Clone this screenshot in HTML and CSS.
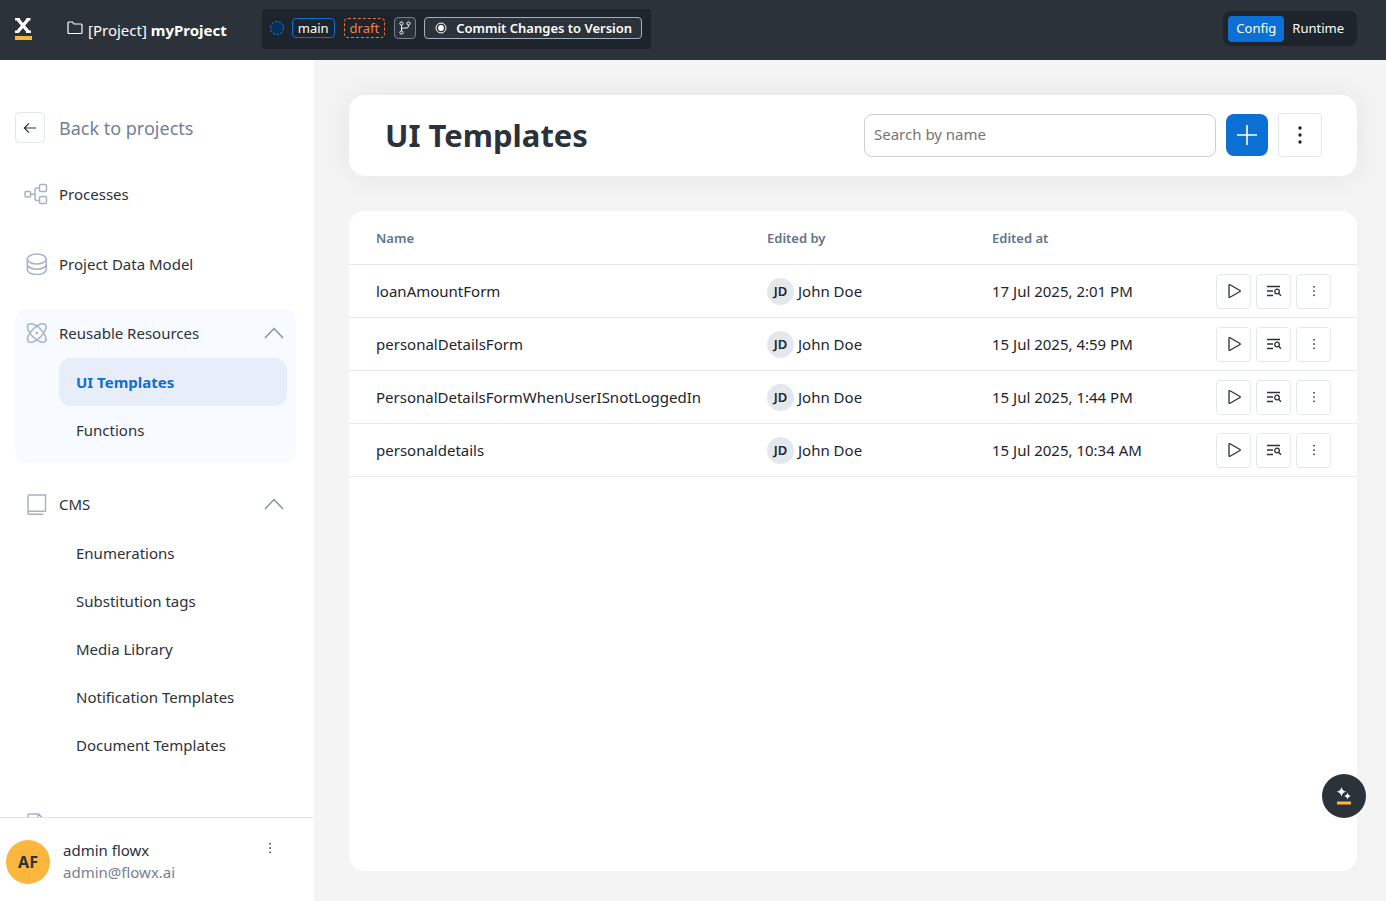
FILE: index.html
```html
<!DOCTYPE html>
<html lang="en">
<head>
  <meta charset="UTF-8">
  <meta name="viewport" content="width=device-width, initial-scale=1.0">
  <title>UI Templates</title>
  <link rel="stylesheet" href="styles.css">
</head>
<body>
  <!-- shared icons -->
  <svg class="sprite" aria-hidden="true">
    <symbol id="i-chevron" viewBox="0 0 20 12"><path d="M1 11 10 1.500 19 11"/></symbol>
    <symbol id="i-play" viewBox="0 0 14 16"><path d="M2 2.200v11.600c0 .5.5.8 1 .5l10-5.800c.4-.2.4-.8 0-1L3 1.700c-.5-.3-1 0-1 .5z"/></symbol>
    <symbol id="i-search-list" viewBox="0 0 16 12"><path d="M1 1.500h13M1 6h6M1 10.500h6"/><circle cx="11" cy="6.500" r="2.300"/><path d="m12.800 8.500 2.200 2.300"/></symbol>
    <symbol id="i-dots" viewBox="0 0 4 12"><rect x="1.300" y="1" width="1.500" height="1.500"/><rect x="1.300" y="5.300" width="1.500" height="1.500"/><rect x="1.300" y="9.600" width="1.500" height="1.500"/></symbol>
  </svg>

  <header class="topbar">
    <svg class="logo" viewBox="0 0 18 22">
      <path d="M4 1.500 14 13.500M14 1.500 4 13.500" stroke="#fff" stroke-width="3.400"/>
      <path d="M1 1.200h5M12.500 1.200h4M1 13.800h4M12 13.800h5" stroke="#fff" stroke-width="2.400"/>
      <rect x="1" y="18" width="17" height="4" fill="#fbb63e"/>
    </svg>
    <div class="project">
      <svg class="folder" viewBox="0 0 16 14"><path d="M1 3V2q0-1 1-1h3.500L7 3h7q1 0 1 1v7.500q0 1-1 1H2q-1 0-1-1z"/></svg>
      <span>[Project] <b>myProject</b></span>
    </div>
    <div class="branch-bar">
      <svg class="branch-dot" viewBox="0 0 16 16"><circle cx="8" cy="8" r="6.500"/></svg>
      <span class="badge badge-main">main</span>
      <span class="badge badge-draft">draft</span>
      <button class="branch-btn" aria-label="Branches">
        <svg viewBox="0 0 12 14"><circle cx="2.500" cy="2.500" r="1.600"/><circle cx="9.500" cy="2.500" r="1.600"/><circle cx="2.500" cy="11.500" r="1.600"/><path d="M2.500 4.200v5.600M9.500 4.200v1Q9.500 7 7.500 7h-3q-2 0-2 2"/></svg>
      </button>
      <button class="commit-btn">
        <svg viewBox="0 0 12 12"><circle cx="6" cy="6" r="5" fill="none" stroke="#fff"/><circle cx="6" cy="6" r="2.900" fill="#fff"/></svg>
        Commit Changes to Version
      </button>
    </div>
    <div class="mode-switch">
      <button class="mode active">Config</button>
      <button class="mode">Runtime</button>
    </div>
  </header>

  <div class="layout">
    <aside class="sidebar">
      <nav class="menu">
        <a class="back" href="#">
          <span class="back-icon"><svg viewBox="0 0 14 12"><path d="M13 6H1.500M6 1.300 1.300 6 6 10.700"/></svg></span>
          Back to projects
        </a>
        <a class="menu-item" href="#">
          <svg viewBox="0 0 24 22"><rect x="1" y="8.500" width="5.500" height="5.500" rx="1"/><rect x="15.500" y="1.500" width="7" height="7" rx="1.300"/><rect x="15.500" y="13.500" width="7" height="7" rx="1.300"/><path d="M6.500 11.200H11M15.500 5h-2.500q-2 0-2 2v8.500q0 2 2 2h2.500"/></svg>
          Processes
        </a>
        <a class="menu-item" href="#">
          <svg viewBox="0 0 24 22"><ellipse cx="12.800" cy="6" rx="9.500" ry="5"/><path d="M3.300 6v10.500c0 2.800 4.300 5 9.500 5s9.500-2.200 9.500-5V6M3.300 11.300c0 2.700 4.300 4.900 9.500 4.900s9.500-2.200 9.500-4.900"/></svg>
          Project Data Model
        </a>
        <div class="group open">
          <button class="menu-item">
            <svg viewBox="0 0 24 22"><ellipse cx="12.800" cy="11" rx="12" ry="5.400" transform="rotate(45 12.800 11)"/><ellipse cx="12.800" cy="11" rx="12" ry="5.400" transform="rotate(-45 12.800 11)"/><circle cx="12.800" cy="11" r=".6"/></svg>
            Reusable Resources
            <svg class="chevron"><use href="#i-chevron"/></svg>
          </button>
          <div class="sub">
            <a class="active" href="#">UI Templates</a>
            <a href="#">Functions</a>
          </div>
        </div>
        <div class="group">
          <button class="menu-item">
            <svg viewBox="0 0 24 22"><path d="M4 20V3.500Q4 2 5.500 2h16v16.200H5.800Q4 18.200 4 20q0 1.300 1.500 1.300h14"/></svg>
            CMS
            <svg class="chevron"><use href="#i-chevron"/></svg>
          </button>
          <div class="sub">
            <a href="#">Enumerations</a>
            <a href="#">Substitution tags</a>
            <a href="#">Media Library</a>
            <a href="#">Notification Templates</a>
            <a href="#">Document Templates</a>
          </div>
        </div>
        <div class="group">
          <button class="menu-item" aria-label="More">
            <svg viewBox="0 0 24 22"><path d="M4 22V7q0-1 1-1h9.500l4.500 4.500V22M14 6v5h5"/></svg>
          </button>
        </div>
      </nav>
      <div class="user">
        <span class="user-avatar">AF</span>
        <div class="user-info">
          <div>admin flowx</div>
          <div class="user-mail">admin@flowx.ai</div>
        </div>
        <button class="user-menu" aria-label="Account menu"><svg><use href="#i-dots"/></svg></button>
      </div>
    </aside>

    <main class="content">
      <section class="page-head">
        <h1>UI Templates</h1>
        <input class="search" type="text" placeholder="Search by name" aria-label="Search by name">
        <button class="add-btn" aria-label="Add"><svg viewBox="0 0 20 20"><path d="M10 0v20M0 10h20"/></svg></button>
        <button class="more-btn" aria-label="More"><svg viewBox="0 0 4 18"><circle cx="2" cy="2" r="1.700"/><circle cx="2" cy="9" r="1.700"/><circle cx="2" cy="16" r="1.700"/></svg></button>
      </section>

      <section class="table-card">
        <table>
          <thead>
            <tr>
              <th>Name</th>
              <th class="col-by">Edited by</th>
              <th class="col-at">Edited at</th>
              <th class="col-actions"></th>
            </tr>
          </thead>
          <tbody id="rows"></tbody>
        </table>
      </section>
    </main>
  </div>

  <button class="assistant" aria-label="Assistant">
    <svg viewBox="0 0 16 18"><path d="M5.500 0Q6.200 4 10.500 4.800 6.200 5.600 5.500 9.600 4.800 5.600.500 4.800 4.800 4 5.500 0z" fill="#fff"/><path d="M11.500 5.500q.5 3 3.500 3.500-3 .5-3.500 3.500-.5-3-3.500-3.500 3-.5 3.500-3.500z" fill="#fff"/><rect x="1" y="14.500" width="14" height="3" fill="#fbb63e"/></svg>
  </button>

  <script>
    const templates = [
      { name: "loanAmountForm", by: "John Doe", at: "17 Jul 2025, 2:01 PM" },
      { name: "personalDetailsForm", by: "John Doe", at: "15 Jul 2025, 4:59 PM" },
      { name: "PersonalDetailsFormWhenUserISnotLoggedIn", by: "John Doe", at: "15 Jul 2025, 1:44 PM" },
      { name: "personaldetails", by: "John Doe", at: "15 Jul 2025, 10:34 AM" }
    ];

    document.getElementById('rows').innerHTML = templates.map(t => `
      <tr>
        <td>${t.name}</td>
        <td><div class="editor"><span class="avatar">JD</span>${t.by}</div></td>
        <td>${t.at}</td>
        <td>
          <div class="actions">
            <button aria-label="Run"><svg class="play"><use href="#i-play"/></svg></button>
            <button aria-label="Usages"><svg class="search-list"><use href="#i-search-list"/></svg></button>
            <button aria-label="More"><svg class="dots"><use href="#i-dots"/></svg></button>
          </div>
        </td>
      </tr>`).join('');
  </script>
</body>
</html>
```
FILE: styles.css
```css
* { margin: 0; padding: 0; box-sizing: border-box; }
body {
  height: 100vh;
  display: flex;
  flex-direction: column;
  background: #f4f4f4;
  font-family: 'Noto Sans', 'Open Sans', sans-serif;
  font-size: 15px;
  line-height: 22px;
  color: #1e242c;
}
button, input { font: inherit; color: inherit; }
button { background: none; border: none; cursor: pointer; }
a { color: inherit; text-decoration: none; }
svg { flex: none; fill: none; }
.sprite { display: none; }

/* top bar */
.topbar {
  height: 60px;
  flex: none;
  display: flex;
  align-items: center;
  padding: 0 29px 3px 14px;
  background: #2b323a;
  color: #fff;
}
.logo { width: 18px; height: 22px; }
.project {
  display: flex;
  align-items: center;
  gap: 5px;
  margin-left: 35px;
  padding-top: 3px;
}
.folder { width: 16px; height: 14px; margin-bottom: 4px; stroke: #fff; stroke-width: 1.2; }
.branch-bar {
  height: 40px;
  display: flex;
  align-items: center;
  gap: 9px;
  margin-left: 35px;
  padding: 0 9px 2px 7px;
  border-radius: 4px;
  background: #1d242b;
  font-size: 13px;
}
.branch-dot {
  width: 16px;
  height: 16px;
  margin-right: -2px;
  fill: #04305c;
  stroke: #2a83dc;
  stroke-dasharray: 2.5 1.5;
}
.badge {
  height: 20px;
  line-height: 18px;
  padding: 0 5px;
  border-radius: 4px;
}
.badge-main { border: 1px solid #0c6fd3; }
.badge-draft { border: 1px dashed #f0743a; color: #f08150; }
.branch-btn, .commit-btn {
  height: 22px;
  display: flex;
  align-items: center;
  justify-content: center;
  border: 1px solid #a6afbd;
  border-radius: 4px;
  background: #2b323a;
}
.branch-btn { width: 22px; border-color: #76808f; }
.branch-btn svg { width: 12px; height: 14px; stroke: #fff; }
.commit-btn {
  gap: 9px;
  padding: 0 9px 0 10px;
  margin-left: -1px;
  font-weight: 600;
  line-height: 18px;
}
.commit-btn svg { width: 12px; height: 12px; }
.mode-switch {
  display: flex;
  margin-left: auto;
  padding: 5px 5px 4px;
  border-radius: 8px;
  background: #1d242b;
  font-size: 13px;
}
.mode {
  height: 26px;
  padding: 0 8px 2px;
  border-radius: 4px;
}
.mode.active { background: #0c6fd3; }

.layout {
  flex: 1;
  display: flex;
  min-height: 0;
}

/* sidebar */
.sidebar {
  width: 314px;
  flex: none;
  display: flex;
  flex-direction: column;
  background: #fff;
  color: #2b323a;
}
.menu {
  flex: 1;
  overflow: hidden;
  padding: 52px 18px 0 15px;
}
.back {
  display: flex;
  align-items: center;
  gap: 14px;
  margin-bottom: 27px;
  font-size: 18px;
  color: #718096;
}
.back-icon {
  width: 30px;
  height: 31px;
  display: flex;
  align-items: center;
  justify-content: center;
  border: 1px solid #e3e8ed;
  border-radius: 4px;
}
.back-icon svg { width: 14px; height: 12px; stroke: #2b323a; stroke-width: 1.2; }
.menu-item {
  width: 100%;
  height: 48px;
  display: flex;
  align-items: center;
  gap: 11px;
  margin-bottom: 22px;
  padding: 0 12px 0 9px;
  text-align: left;
}
.menu-item svg { width: 24px; height: 22px; stroke: #a6b3c4; stroke-width: 1.5; }
.menu-item .chevron { width: 20px; height: 12px; margin-left: auto; stroke: #8391a5; }
.group {
  margin-top: -1px;
  margin-bottom: 18px;
  padding-bottom: 9px;
  border-radius: 12px;
}
.group.open { background: #f7fbff; }
.group .menu-item { margin-bottom: 0; }
.sub { padding: 1px 9px 0 44px; }
.sub a {
  height: 48px;
  display: flex;
  align-items: center;
  padding: 0 17px;
  border-radius: 12px;
}
.sub a.active {
  background: #e7eefa;
  color: #0c6fd3;
  font-weight: 700;
}
.user {
  height: 84px;
  flex: none;
  display: flex;
  align-items: center;
  gap: 13px;
  padding: 4px 34px 0 6px;
  border-top: 1px solid #dfe3e8;
}
.user-avatar {
  width: 44px;
  height: 44px;
  line-height: 44px;
  border-radius: 50%;
  background: #fbb63e;
  text-align: center;
  font-size: 16px;
  font-weight: 700;
}
.user-info { padding-bottom: 2px; }
.user-mail { color: #77808f; }
.user-menu { align-self: flex-start; margin-left: auto; padding: 20px 8px; line-height: 0; }
.user-menu svg { width: 4px; height: 12px; fill: #2b323a; }

/* content */
.content {
  flex: 1;
  min-width: 0;
  display: flex;
  flex-direction: column;
  gap: 35px;
  padding: 35px 29px 30px 35px;
}
.page-head {
  display: flex;
  align-items: center;
  gap: 10px;
  padding: 18px 35px 19px 36px;
  border-radius: 16px;
  background: #fff;
  box-shadow: 0 0 30px rgba(43, 50, 90, 0.08);
}
h1 {
  margin-right: auto;
  font-size: 31px;
  line-height: 44px;
  color: #2b323a;
}
.search {
  width: 352px;
  height: 43px;
  padding: 0 9px 2px;
  border: 1px solid #cbcfdb;
  border-radius: 8px;
}
.search::placeholder { color: #757575; }
.add-btn, .more-btn {
  display: flex;
  align-items: center;
  justify-content: center;
}
.add-btn {
  width: 42px;
  height: 42px;
  border-radius: 8px;
  background: #0c6fd3;
}
.add-btn svg { width: 20px; height: 20px; stroke: #fff; stroke-width: 1.6; }
.more-btn {
  width: 44px;
  height: 44px;
  border: 1px solid #e3e8ed;
  border-radius: 4px;
}
.more-btn svg { width: 4px; height: 18px; fill: #1e242c; }
.table-card {
  flex: 1;
  border-radius: 16px;
  background: #fff;
}
table {
  width: 100%;
  table-layout: fixed;
  border-collapse: separate;
  border-spacing: 0;
}
.col-by { width: 225px; }
.col-at { width: 224px; }
.col-actions { width: 141px; }
th {
  height: 54px;
  border-bottom: 1px solid #e1e7ec;
  text-align: left;
  font-size: 13px;
  font-weight: 600;
  color: #64748b;
}
td {
  height: 53px;
  border-bottom: 1px solid #e8ebee;
}
th:first-child, td:first-child { padding-left: 27px; }
.editor {
  display: flex;
  align-items: center;
  gap: 4px;
}
.avatar {
  width: 27px;
  height: 27px;
  line-height: 27px;
  border-radius: 50%;
  background: #e3e8ed;
  text-align: center;
  font-size: 13px;
  font-weight: 600;
}
.actions { display: flex; gap: 5px; }
.actions button {
  width: 35px;
  height: 35px;
  display: flex;
  align-items: center;
  justify-content: center;
  border: 1px solid #e3e8ed;
  border-radius: 4px;
}
.actions svg { stroke: #2b323a; stroke-width: 1.3; }
.actions .play { width: 14px; height: 16px; }
.actions .search-list { width: 16px; height: 12px; }
.actions .dots { width: 4px; height: 12px; fill: #2b323a; stroke: none; }

.assistant {
  position: fixed;
  right: 20px;
  bottom: 83px;
  width: 44px;
  height: 44px;
  display: flex;
  align-items: center;
  justify-content: center;
  border-radius: 50%;
  background: #2b323a;
}
.assistant svg { width: 16px; height: 18px; }
```
